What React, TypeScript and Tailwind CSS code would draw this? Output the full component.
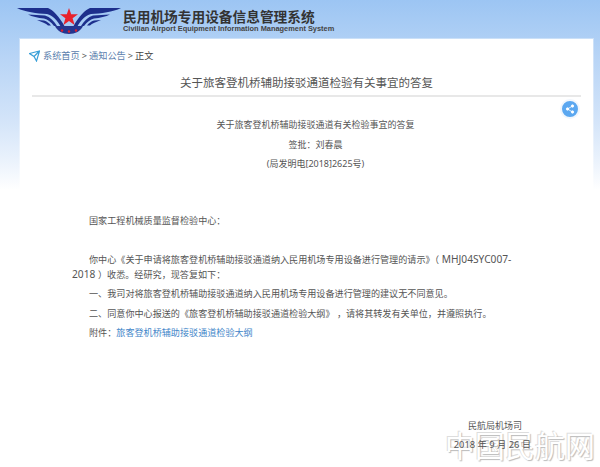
import React from "react";

const Logo = () => (
  <svg width="108" height="36" viewBox="0 0 108 36" className="shrink-0">
    {/* left wing */}
    <path d="M2 5 L33 5 C38 7 44 13 50 24 L46 24 C42 17 38 12.5 32 11 C22 10.5 10 9 2 5Z" fill="#1d2f8c" />
    <path d="M13 11.5 L30 12.5 C35 14 39 18 42 23 L39 23 C36 19 33 16.5 29 15.5 C23 15 17 13.5 13 11.5Z" fill="#1d2f8c" />
    <path d="M22 17 L29 17.5 C32 18.5 34 20 36 22.5 L33 22.5 C31 20.5 27 19 22 17Z" fill="#1d2f8c" />
    {/* right wing */}
    <path d="M106 5 L75 5 C70 7 64 13 58 24 L62 24 C66 17 70 12.5 76 11 C86 10.5 98 9 106 5Z" fill="#1d2f8c" />
    <path d="M95 11.5 L78 12.5 C73 14 69 18 66 23 L69 23 C72 19 75 16.5 79 15.5 C85 15 91 13.5 95 11.5Z" fill="#1d2f8c" />
    <path d="M86 17 L79 17.5 C76 18.5 74 20 72 22.5 L75 22.5 C77 20.5 81 19 86 17Z" fill="#1d2f8c" />
    {/* base */}
    <path d="M40 23 L68 23 C66 28 60 31 54 31 C48 31 42 28 40 23Z" fill="#25358f" />
    <circle cx="47" cy="27.5" r="1.2" fill="#e3202c" />
    <circle cx="54" cy="28.5" r="1.2" fill="#e3202c" />
    <circle cx="61" cy="27.5" r="1.2" fill="#e3202c" />
    {/* star */}
    <path d="M54 5 L56.2 11.2 L63 11.2 L57.6 15.3 L59.6 22 L54 18 L48.4 22 L50.4 15.3 L45 11.2 L51.8 11.2Z" fill="#e8212b" />
  </svg>
);

export default function App() {
  return (
    <div className="relative h-[467px] w-[600px] overflow-hidden bg-[linear-gradient(to_bottom,#9cc5f3_0px,#b9d5f6_60px,#d3e4f9_120px,#eaf2fc_160px,#ffffff_190px)] font-['Noto_Sans','Noto_Sans_CJK_SC',sans-serif] text-[#555]">
      <header className="flex h-[39px] pt-[3px] pl-[15px]">
        <Logo />
        <div className="pt-[6px]">
          <div className="text-[13.7px] leading-[15px] font-bold text-[#333]">民用机场专用设备信息管理系统</div>
          <div className="font-['Liberation_Sans',sans-serif] text-[7.4px] leading-[9px] font-bold whitespace-nowrap text-[#444]">
            Civilian Airport Equipment Information Management System
          </div>
        </div>
      </header>

      <main className="ml-[20px] h-[428px] w-[573px] bg-white px-[12px] shadow-[0_0_0_1px_rgba(255,255,255,0.35)]">
        <nav className="flex h-[33px] items-center text-[9.2px] text-[#5b80ad]">
          <svg width="11" height="12" viewBox="0 0 11 12" fill="none" stroke="#3aa0d8" strokeWidth="1.2" className="mr-[3px] -ml-[3px] shrink-0">
            <path d="M0.5 3.5 L10.5 1 L7.5 11 L5 6.5Z M5 6.5 L10.5 1" />
          </svg>
          <span>系统首页</span>
          <span className="mx-[2px] text-[#555]">&gt;</span>
          <span>通知公告</span>
          <span className="mx-[2px] text-[#555]">&gt;</span>
          <span className="text-[#444]">正文</span>
        </nav>
        <h1 className="border-b-2 border-[#e8e8e8] pt-[3px] pb-[4px] text-center text-[11.5px] leading-[16px] font-normal text-[#555]">
          关于旅客登机桥辅助接驳通道检验有关事宜的答复
        </h1>

        <div className="relative">
          <div className="absolute top-[2px] right-[1px] flex h-[20px] w-[20px] items-center justify-center rounded-full border-2 border-[#f0f6fd] bg-[#5aa7f0]">
            <svg width="10" height="10" viewBox="0 0 10 10" fill="white" stroke="white" strokeWidth="0.8">
              <circle cx="7.5" cy="2" r="1.2" />
              <circle cx="2.5" cy="5" r="1.2" />
              <circle cx="7.5" cy="8" r="1.2" />
              <path d="M7.5 2 L2.5 5 L7.5 8" fill="none" />
            </svg>
          </div>
        </div>

        <div className="pt-[18px] pl-[18px] text-center text-[9px] leading-[19.5px]">
          <p>关于旅客登机桥辅助接驳通道有关检验事宜的答复</p>
          <p>签批：刘春晨</p>
          <p>(局发明电[2018]2625号)</p>
        </div>

        <div className="box-content w-[443px] pt-[37px] pl-[40px] text-[9.1px] text-[#555]">
          <p className="pl-[17px] leading-[20px]">国家工程机械质量监督检验中心：</p>
          <p className="mt-[21px] indent-[17px] leading-[14px]">
            你中心《关于申请将旅客登机桥辅助接驳通道纳入民用机场专用设备进行管理的请示》（
            <span className="text-[10.2px]"> MHJ04SYC007-2018 </span>
            ）收悉。经研究，现答复如下：
          </p>
          <p className="mt-[2px] pl-[17px] leading-[20px]">一、我司对将旅客登机桥辅助接驳通道纳入民用机场专用设备进行管理的建议无不同意见。</p>
          <p className="pl-[17px] leading-[19.5px] whitespace-nowrap">二、同意你中心报送的《旅客登机桥辅助接驳通道检验大纲》 ，请将其转发有关单位，并遵照执行。</p>
          <p className="pl-[17px] leading-[19.5px]">
            附件：<span className="text-[#3f86c9]">旅客登机桥辅助接驳通道检验大纲</span>
          </p>
        </div>

        <div className="relative z-10 mt-[73px] flex flex-col items-end pr-[50px] text-[9px]">
          <p className="pr-[9px] leading-[20px]">民航局机场司</p>
          <p className="text-[9.3px] leading-[18px]">2018 年 9 月 26 日</p>
        </div>
      </main>

      <div className="absolute right-[5px] bottom-[6px] text-[30px] leading-[30px] font-normal text-white [text-shadow:1px_1px_1px_#bbb,-1px_-1px_0_#ddd]">
        中国民航网
      </div>
    </div>
  );
}
